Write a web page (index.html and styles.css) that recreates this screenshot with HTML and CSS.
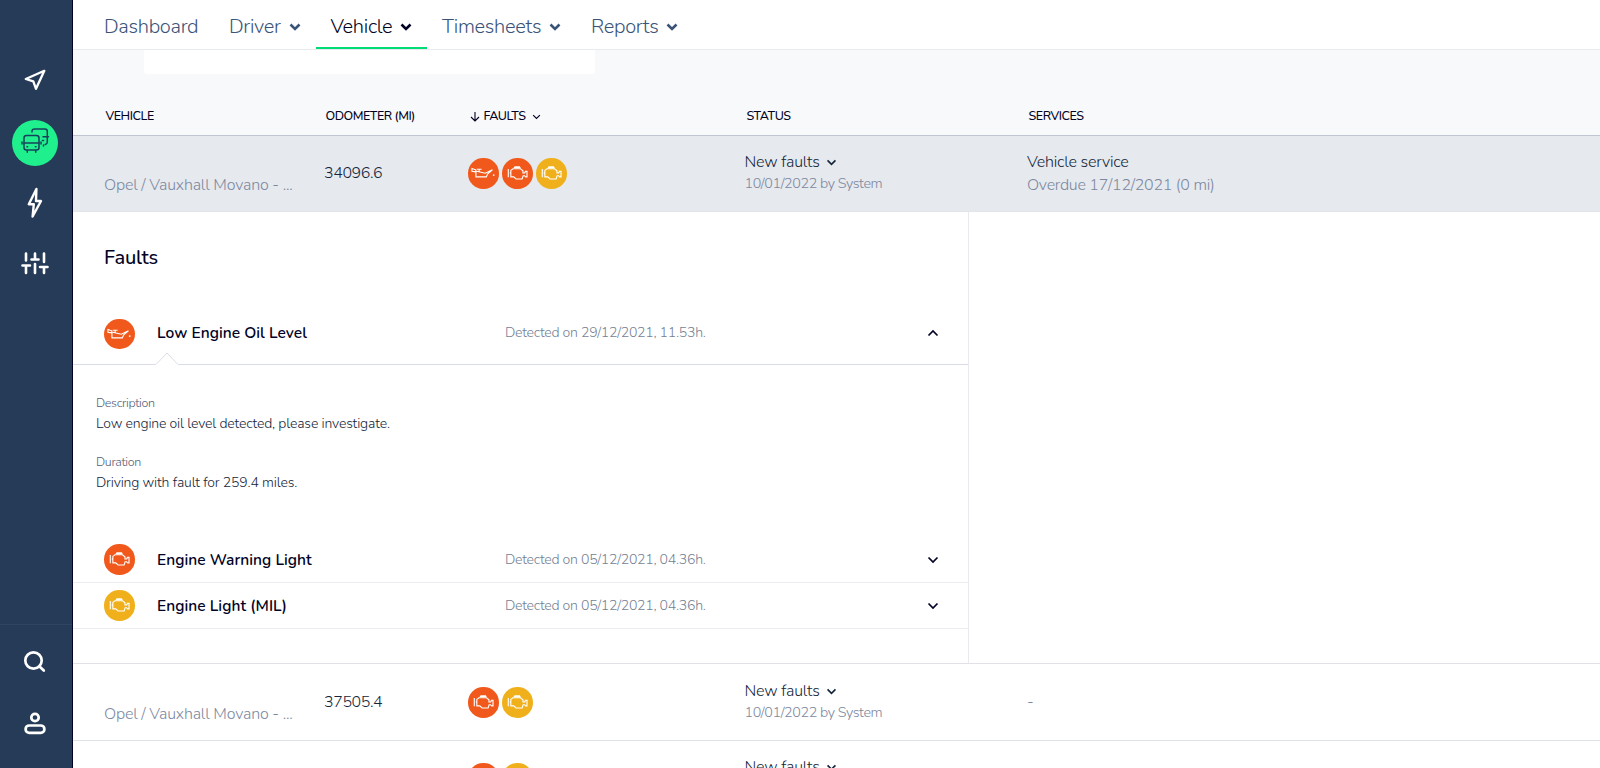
FILE: index.html
```
<!DOCTYPE html>
<html lang="en">

<head>
    <meta charset="UTF-8">
    <title>Vehicle faults</title>
    <link rel="stylesheet" href="styles.css">
</head>

<body>
    <svg class="sprite">
        <symbol id="chevron" viewBox="0 0 12 8">
            <path d="M1.5 1.5 L6 6 L10.5 1.5" fill="none" stroke="currentColor" />
        </symbol>
        <symbol id="engine" viewBox="0 0 30 30">
            <path d="M6.2 10.7V18.9M7.6 14.8H8.7M8.7 12.2L10.8 10.6H18.2L20.6 12.6V14.7H22.4L23 13.2H24.6V18.6H23.2L22.2 17.4H20.8L19.8 20.6H13.8L11.6 18.6H8.7Z" fill="none" stroke="#fff" stroke-width="1.1" />
            <path d="M12.4 8.2H17.6L18.6 10H11.2Z" fill="#fff" />
        </symbol>
        <symbol id="oil" viewBox="0 0 30 30">
            <path d="M7.6 13.6L3.9 13V10.4L7.6 11.6ZM7.8 12.8L13.8 14.2L17 15L24 11.6L19.4 15.6L18 18.6H7.8ZM11 13V11.2M8.6 11.1H13.4" fill="none" stroke="#fff" stroke-width="1.1" />
            <circle cx="25.3" cy="16.8" r=".9" fill="#fff" />
        </symbol>
    </svg>

    <div class="sidebar">
        <div class="side-main">
            <div class="side-item">
                <svg width="24" height="24" viewBox="0 0 24 24" fill="none" stroke="#fff" stroke-width="2.3" stroke-linejoin="round"><path d="M21.3 1.8L2.8 10L10.3 12.4L13 19.8Z" /></svg>
            </div>
            <div class="side-item active">
                <svg width="46" height="46" viewBox="0 0 46 46" fill="none" stroke="#17415a" stroke-width="1.5" stroke-linecap="round" stroke-linejoin="round">
                    <rect x="12" y="15.5" width="15" height="14.5" rx="2.5" />
                    <path d="M12 23H27M10 22V24M29 22V24M15 26.8H15.6M23.4 26.8H24M15.3 30.5V32.3M23.7 30.5V32.3M20 12V10.5Q20.5 9 22.5 9H33Q35.3 9 35.3 11.5V22Q35.3 24 33.3 24.5M31 16.8H36.5M30.5 20.5H31.5M31.5 25V26" />
                </svg>
            </div>
            <div class="side-item">
                <svg width="24" height="34" viewBox="0 0 24 34" fill="none" stroke="#fff" stroke-width="2.4" stroke-linejoin="round"><path d="M13.4 3L5.8 18.2H10.8L9.6 30.5L18 15H13Z" /></svg>
            </div>
            <div class="side-item">
                <svg width="30" height="26" viewBox="0 0 30 26" fill="none" stroke="#fff" stroke-width="2.6" stroke-linecap="round"><path d="M6 2.500V9.500M2.500 14.500H10M6 14.500V22M15 2.500V8.500M11.500 8.500H18.500M15 13V22M24 2.500V11M20 16H27.500M24 16V22" /></svg>
            </div>
        </div>
        <div class="side-bottom">
            <div class="side-item">
                <svg width="26" height="26" viewBox="0 0 26 26" fill="none" stroke="#fff" stroke-width="2.7" stroke-linecap="round"><circle cx="11.500" cy="10.500" r="8.200" /><path d="M17.500 16.500L21.800 20.600" /></svg>
            </div>
            <div class="side-item">
                <svg width="26" height="26" viewBox="0 0 26 26" fill="none" stroke="#fff" stroke-width="2.700"><circle cx="13" cy="6.500" r="3.700" /><rect x="3.600" y="14.500" width="18.800" height="7.300" rx="3.650" /></svg>
            </div>
        </div>
    </div>

    <div class="main">
        <div class="nav">
            <a class="nav-item dashboard">Dashboard</a>
            <a class="nav-item driver">Driver <svg class="nav-chevron"><use href="#chevron" /></svg></a>
            <a class="nav-item vehicle selected">Vehicle <svg class="nav-chevron"><use href="#chevron" /></svg></a>
            <a class="nav-item timesheets">Timesheets <svg class="nav-chevron"><use href="#chevron" /></svg></a>
            <a class="nav-item reports">Reports <svg class="nav-chevron"><use href="#chevron" /></svg></a>
        </div>

        <div class="filter-area">
            <div class="filter-box"></div>
        </div>

        <div class="table-head">
            <div>VEHICLE</div>
            <div>ODOMETER (MI)</div>
            <div class="sorted">
                <svg width="10" height="10" viewBox="0 0 10 10" fill="none" stroke="currentColor" stroke-width="1.1"><path d="M5 0V9M1 5L5 9L9 5" /></svg>
                FAULTS
                <svg class="head-chevron"><use href="#chevron" /></svg>
            </div>
            <div>STATUS</div>
            <div>SERVICES</div>
        </div>

        <div class="row open">
            <div class="vehicle-name">Opel / Vauxhall Movano - ...</div>
            <div class="odometer">34096.6</div>
            <div class="icons">
                <svg class="badge red"><use href="#oil" /></svg>
                <svg class="badge red"><use href="#engine" /></svg>
                <svg class="badge yellow"><use href="#engine" /></svg>
            </div>
            <div class="status">
                <div class="status-name">New faults <svg class="row-chevron"><use href="#chevron" /></svg></div>
                <div class="status-date">10/01/2022 by System</div>
            </div>
            <div class="services">
                <div class="service-name">Vehicle service</div>
                <div class="service-date">Overdue 17/12/2021 (0 mi)</div>
            </div>
        </div>

        <div class="details">
            <div class="faults">
                <h2>Faults</h2>
                <div class="fault expanded">
                    <svg class="badge red"><use href="#oil" /></svg>
                    <div class="fault-name">Low Engine Oil Level</div>
                    <div class="fault-date">Detected on 29/12/2021, 11.53h.</div>
                    <svg class="fault-chevron up"><use href="#chevron" /></svg>
                    <svg class="notch" viewBox="0 0 22 13"><path d="M0 12.500L11 1L22 12.500V13H0Z" fill="#fff" /><path d="M.5 12L11 1L21.500 12" fill="none" stroke="#dadde6" /></svg>
                </div>
                <div class="fault-body">
                    <div class="label">Description</div>
                    <div class="value">Low engine oil level detected, please investigate.</div>
                    <div class="label duration">Duration</div>
                    <div class="value">Driving with fault for 259.4 miles.</div>
                </div>
                <div class="fault">
                    <svg class="badge red"><use href="#engine" /></svg>
                    <div class="fault-name">Engine Warning Light</div>
                    <div class="fault-date">Detected on 05/12/2021, 04.36h.</div>
                    <svg class="fault-chevron"><use href="#chevron" /></svg>
                </div>
                <div class="fault">
                    <svg class="badge yellow"><use href="#engine" /></svg>
                    <div class="fault-name">Engine Light (MIL)</div>
                    <div class="fault-date">Detected on 05/12/2021, 04.36h.</div>
                    <svg class="fault-chevron"><use href="#chevron" /></svg>
                </div>
            </div>
        </div>

        <div class="row">
            <div class="vehicle-name">Opel / Vauxhall Movano - ...</div>
            <div class="odometer">37505.4</div>
            <div class="icons">
                <svg class="badge red"><use href="#engine" /></svg>
                <svg class="badge yellow"><use href="#engine" /></svg>
            </div>
            <div class="status">
                <div class="status-name">New faults <svg class="row-chevron"><use href="#chevron" /></svg></div>
                <div class="status-date">10/01/2022 by System</div>
            </div>
            <div class="no-services">-</div>
        </div>

        <div class="row last">
            <div class="vehicle-name"></div>
            <div class="odometer"></div>
            <div class="icons">
                <svg class="badge red"><use href="#engine" /></svg>
                <svg class="badge yellow"><use href="#engine" /></svg>
            </div>
            <div class="status">
                <div class="status-name">New faults <svg class="row-chevron"><use href="#chevron" /></svg></div>
            </div>
            <div class="services"></div>
        </div>
    </div>
</body>

</html>
```

FILE: styles.css
```
* {
    box-sizing: border-box;
}

body {
    margin: 0;
    display: flex;
    height: 768px;
    overflow: hidden;
    font-family: Nunito, Lato, sans-serif;
    font-size: 16px;
    font-weight: 350;
    letter-spacing: -0.2px;
    color: #14263a;
    background-color: #fff;
}

svg {
    display: block;
    flex-shrink: 0;
}

.sprite {
    position: absolute;
    width: 0;
    height: 0;
}

/* sidebar */
.sidebar {
    width: 73px;
    flex-shrink: 0;
    display: flex;
    flex-direction: column;
    justify-content: space-between;
    background-color: #263b57;
    border-right: 1px solid #020225;
}

.side-main {
    padding: 50px 2px 0 0;
}

.side-bottom {
    height: 144px;
    padding: 7px 2px 0 0;
    border-top: 1px solid #2f4663;
}

.side-item {
    height: 61px;
    display: flex;
    align-items: center;
    justify-content: center;
}

.side-item.active {
    padding-top: 2px;
}

.side-item.active svg {
    border-radius: 50%;
    background-color: #1ff08d;
}

/* top navigation */
.main {
    flex: 1;
    min-width: 0;
}

.nav {
    height: 50px;
    padding-left: 16px;
    display: flex;
    border-bottom: 1px solid #e8ebee;
}

.nav-item {
    height: 49px;
    padding: 4px 15px 0;
    display: flex;
    align-items: center;
    justify-content: space-between;
    font-size: 20px;
    font-weight: 300;
    letter-spacing: -0.3px;
    color: #3a5378;
}

.nav-item.selected {
    color: #020225;
    border-bottom: 2px solid #00dc75;
    padding-top: 6px;
}

.dashboard {
    width: 125px;
}

.driver {
    width: 101.5px;
}

.vehicle {
    width: 111.5px;
}

.timesheets {
    width: 149px;
}

.reports {
    width: 117px;
}

.nav-chevron {
    width: 12px;
    height: 8px;
    stroke-width: 2.6;
}

/* table */
.filter-area {
    height: 24px;
    padding-left: 71px;
    background-color: #f8f9fb;
}

.filter-box {
    width: 451px;
    height: 24px;
    background-color: #fff;
    border-radius: 0 0 3px 3px;
}

.table-head,
.row {
    display: grid;
    grid-template-columns: 220px 144px 277px 282px 1fr;
    padding-left: 31px;
}

.table-head {
    height: 62px;
    padding-top: 34px;
    padding-left: 32.5px;
    font-size: 12.5px;
    line-height: 16px;
    font-weight: 500;
    letter-spacing: -0.45px;
    color: #020225;
    background-color: #f8f9fb;
    border-bottom: 1px solid #bfc5d1;
}

.sorted {
    height: 16px;
    display: flex;
    align-items: center;
    gap: 4px;
}

.sorted svg {
    margin-top: 2px;
}

.head-chevron {
    width: 9px;
    height: 6px;
    margin-left: 3px;
    stroke-width: 1.5;
}

.row {
    height: 77px;
    padding-top: 1px;
    border-bottom: 1px solid #dfe2e9;
}

.row.open {
    height: 76px;
    padding-top: 0;
    background-color: #e6e9ee;
    border-bottom-color: #e0e5e8;
}

.row.last {
    padding-top: 0;
}

.vehicle-name {
    padding-top: 39px;
    line-height: 20px;
    color: #7c889f;
}

.odometer {
    padding-top: 27px;
    line-height: 20px;
    letter-spacing: -0.4px;
}

.icons {
    padding-top: 22px;
    display: flex;
    gap: 3.5px;
}

.badge {
    width: 30.5px;
    height: 30.5px;
    border-radius: 50%;
}

.red {
    background-color: #f0591b;
}

.yellow {
    background-color: #f0b01b;
}

.status,
.services {
    height: 60px;
    padding-top: 15.5px;
    line-height: 20px;
}

.status {
    margin-left: -0.5px;
}

.status-name {
    display: flex;
    align-items: center;
    gap: 6px;
}

.row-chevron {
    width: 11px;
    height: 7px;
    margin-top: 1px;
    stroke-width: 1.9;
}

.status-date {
    margin-top: 2px;
    font-size: 14.3px;
    letter-spacing: -0.4px;
    color: #7c889f;
}

.service-date {
    margin-top: 3px;
    letter-spacing: -0.27px;
    color: #7c889f;
}

.no-services {
    padding-top: 27px;
    line-height: 20px;
    color: #7c889f;
}

/* opened row */
.details {
    height: 452px;
    border-bottom: 1px solid #e0e2e8;
}

.faults {
    width: 896px;
    height: 451px;
    border-right: 1px solid #e8eaed;
}

h2 {
    margin: 0;
    padding: 33px 0 0 31px;
    height: 92px;
    font-size: 20px;
    line-height: 26px;
    font-weight: 500;
    color: #020225;
}

.fault {
    height: 46px;
    padding-left: 31px;
    display: grid;
    grid-template-columns: 53px 348px 421px 14px;
    align-items: center;
    color: #020225;
    border-bottom: 1px solid #eaecef;
}

.fault.expanded {
    position: relative;
    height: 61px;
    border-bottom-color: #dadde6;
}

.fault-name {
    font-size: 15.5px;
    font-weight: 600;
    letter-spacing: 0.05px;
}

.fault-date {
    font-size: 14.1px;
    letter-spacing: -0.27px;
    color: #757f93;
}

.fault-name,
.fault-date {
    padding-bottom: 1px;
}

.expanded .fault-name,
.expanded .fault-date {
    padding-bottom: 3px;
}

.fault-chevron {
    width: 14px;
    height: 8px;
    stroke-width: 1.7;
}

.expanded .fault-chevron {
    margin-bottom: 2px;
}

.up {
    transform: rotate(180deg);
}

.notch {
    position: absolute;
    left: 83px;
    bottom: -1px;
    width: 22px;
    height: 13px;
}

.fault-body {
    height: 172px;
    padding: 29px 0 0 23px;
}

.label {
    font-size: 12.5px;
    line-height: 18px;
    letter-spacing: -0.35px;
    color: #526076;
}

.value {
    margin-top: 2px;
    font-size: 14px;
    line-height: 20px;
    letter-spacing: -0.16px;
}

.duration {
    margin-top: 19px;
}
```
